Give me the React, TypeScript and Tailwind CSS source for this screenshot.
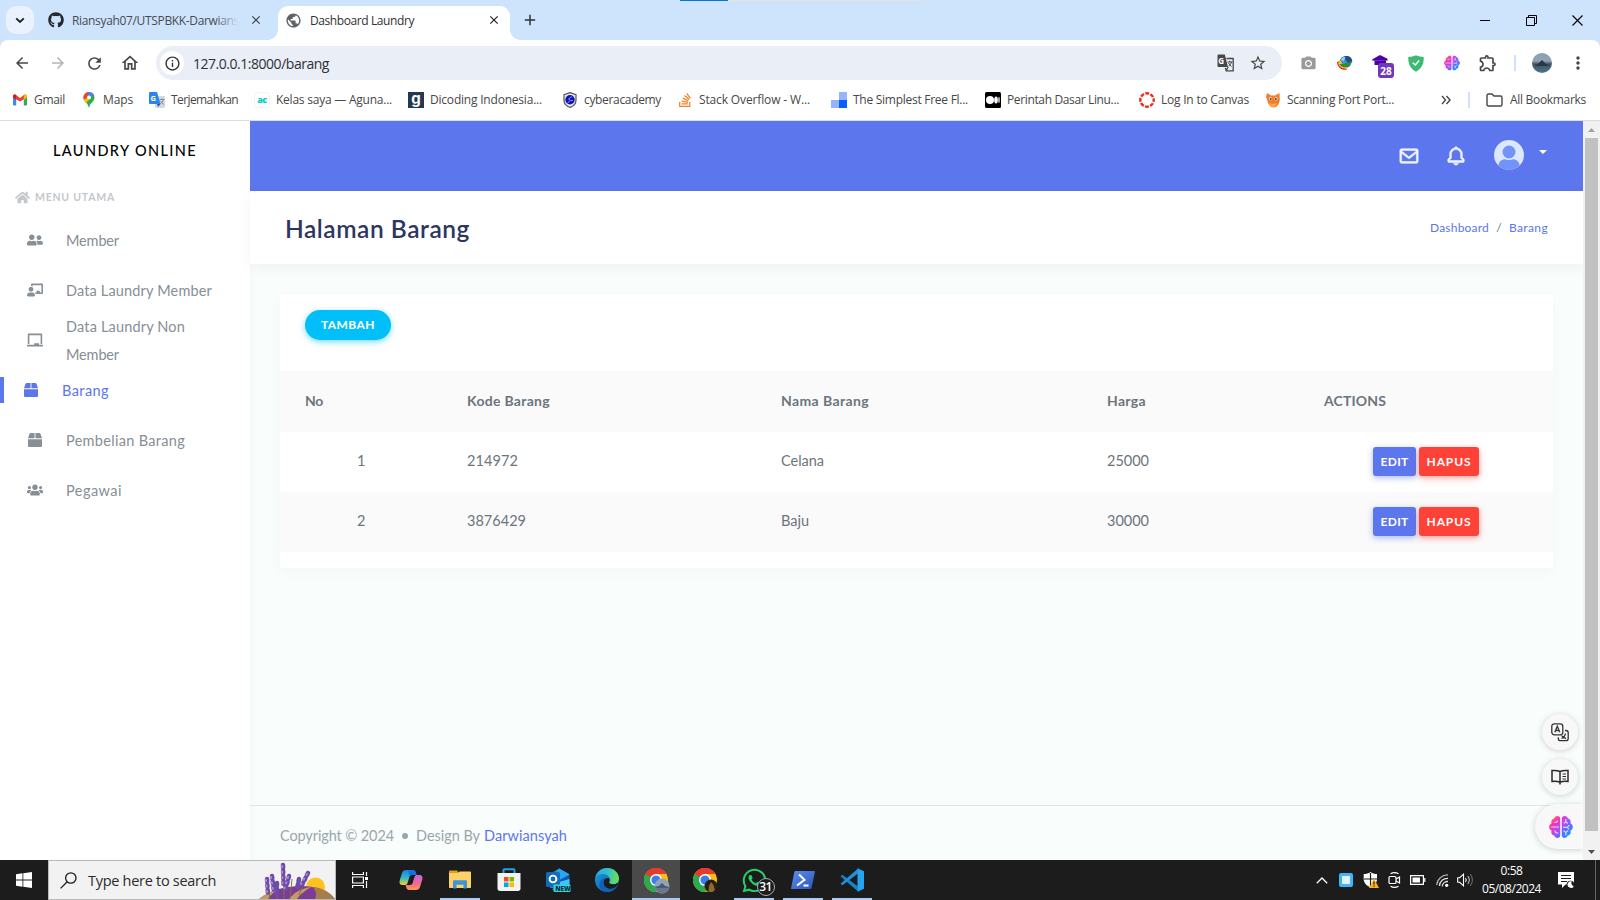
import { useLayoutEffect, useRef, useState, type ReactNode } from "react";
import {
  FaBox,
  FaChalkboard,
  FaChalkboardTeacher,
  FaGithub,
  FaHome,
  FaStackOverflow,
  FaUserFriends,
  FaUsers,
  FaWhatsapp,
} from "react-icons/fa";
import { BiBell, BiEnvelope } from "react-icons/bi";
import {
  MdArrowBack,
  MdArrowForward,
  MdClose,
  MdInfoOutline,
  MdMoreVert,
  MdOutlineExtension,
  MdOutlineHome,
  MdPhotoCamera,
  MdPublic,
  MdRefresh,
  MdStarOutline,
} from "react-icons/md";

/* One line of text, tracked so that it fills exactly `w` pixels. */
function Fit({ w, className = "", children }: { w: number; className?: string; children: string }) {
  const ref = useRef<HTMLSpanElement>(null);
  const [spacing, setSpacing] = useState(0);
  useLayoutEffect(() => {
    const el = ref.current;
    if (el) setSpacing((w - el.getBoundingClientRect().width) / children.length);
  }, [w, children]);
  return (
    <span className={`block shrink-0 whitespace-nowrap ${className}`} style={{ width: w }}>
      <span ref={ref} className="inline-block" style={{ letterSpacing: spacing }}>
        {children}
      </span>
    </span>
  );
}

function Gradients() {
  return (
    <svg width="0" height="0" className="absolute">
      <defs>
        <linearGradient id="brain" gradientUnits="userSpaceOnUse" x1="2" y1="2" x2="22" y2="21">
          <stop offset="0" stopColor="#ff9a1f" />
          <stop offset="0.22" stopColor="#ff2fb3" />
          <stop offset="0.5" stopColor="#b04df5" />
          <stop offset="0.72" stopColor="#5b6cff" />
          <stop offset="1" stopColor="#00a8ff" />
        </linearGradient>
        <linearGradient id="copA" x1="0" y1="0" x2="0" y2="1">
          <stop offset="0" stopColor="#1f7ff0" />
          <stop offset="0.5" stopColor="#26b8c9" />
          <stop offset="1" stopColor="#f6d32b" />
        </linearGradient>
        <linearGradient id="copB" x1="0" y1="0" x2="0" y2="1">
          <stop offset="0" stopColor="#c269f2" />
          <stop offset="0.55" stopColor="#f2668f" />
          <stop offset="1" stopColor="#ff9a4d" />
        </linearGradient>
        <linearGradient id="edgeA" x1="0" y1="0.2" x2="1" y2="0.3">
          <stop offset="0" stopColor="#2aa7e8" />
          <stop offset="0.55" stopColor="#35c1c9" />
          <stop offset="1" stopColor="#6be04c" />
        </linearGradient>
        <linearGradient id="edgeB" x1="0" y1="0" x2="1" y2="1">
          <stop offset="0" stopColor="#1b9de2" />
          <stop offset="1" stopColor="#0b4f9e" />
        </linearGradient>
        <linearGradient id="psg" x1="0" y1="0" x2="1" y2="1">
          <stop offset="0" stopColor="#5a8df0" />
          <stop offset="1" stopColor="#2b57b8" />
        </linearGradient>
        <linearGradient id="photo" x1="0" y1="0" x2="0" y2="1">
          <stop offset="0" stopColor="#7fa3bd" />
          <stop offset="0.4" stopColor="#9a9fae" />
          <stop offset="0.55" stopColor="#41536a" />
          <stop offset="1" stopColor="#4f7787" />
        </linearGradient>
      </defs>
    </svg>
  );
}

function BrainIcon({ size }: { size: number }) {
  return (
    <svg width={size} height={size} viewBox="0 0 24 24">
      <path
        d="M11.200 3.500v17c0 1.500-1.200 2.500-2.700 2.500-1.600 0-2.800-1-3.200-2.400C3.500 20.300 2.300 19 2.300 17.300c0-.5.1-1 .300-1.500C1.100 15 .2 13.600.2 12s.9-3.100 2.400-3.800c-.9-2.200.4-4.400 2.500-4.800C5.400 1.900 6.800 1 8.300 1c1.600 0 2.900 1 2.900 2.500z"
        fill="url(#brain)"
      />
      <path
        d="M12.800 3.500v17c0 1.500 1.200 2.500 2.700 2.500 1.600 0 2.800-1 3.200-2.400 1.800-.3 3-1.600 3-3.300 0-.5-.1-1-.3-1.500 1.500-.800 2.400-2.200 2.400-3.800s-.9-3.100-2.400-3.800c.9-2.200-.4-4.400-2.500-4.800C18.600 1.900 17.200 1 15.700 1c-1.600 0-2.900 1-2.900 2.500z"
        fill="url(#brain)"
      />
      <path
        d="M5.800 7.300c1.200.3 2.300-.3 2.600-1.500M2.500 12h7M6 16.200c.3 1.600 1.500 2.200 3 1.800M15.300 8.200l1.500-1.500 1.600 1.500M16.800 6.700V4.500M14.500 12.300h3.700l2-2M18.200 12.300l1.500 1.500M15 16l1.800 1.500 2-1.700M16.800 17.500v2.300"
        stroke="#fff"
        strokeOpacity=".75"
        strokeWidth="1.200"
        fill="none"
        strokeLinecap="round"
      />
    </svg>
  );
}

/* ---------- browser icons ---------- */

function GmailIcon() {
  return (
    <svg width="16" height="16" viewBox="0 0 16 16">
      <path d="M1 4v8.500c0 .6.4 1 1 1h2.200V7z" fill="#4285f4" />
      <path d="M15 4v8.500c0 .6-.4 1-1 1h-2.200V7z" fill="#34a853" />
      <path d="M1 4.300C1 2.600 2.900 2 4.100 3L8 6v3.600L1 5.600z" fill="#ea4335" />
      <path d="M15 4.300C15 2.600 13.100 2 11.900 3L8 6v3.600L15 5.600z" fill="#ea4335" />
      <path d="M11.800 3.100L13 2.500c1.200-.2 2 .7 2 1.800v1.300l-3.200 2.300z" fill="#fbbc04" />
      <path d="M4.200 3.100L3 2.500c-1.200-.2-2 .7-2 1.800v1.300l3.200 2.300z" fill="#c5221f" />
    </svg>
  );
}
function MapsIcon() {
  return (
    <svg width="16" height="16" viewBox="0 0 16 16">
      <path d="M8 0a5.500 5.500 0 0 0-5.500 5.500C2.500 9.500 6.800 10.500 8 16c1.200-5.500 5.500-6.500 5.500-10.500A5.500 5.500 0 0 0 8 0z" fill="#34a853" />
      <path d="M3.700 2L8 5.500 3.600 9C2.500 7.500 1.800 4.500 3.700 2z" fill="#fbbc04" />
      <path d="M3.600 2.200A5.500 5.500 0 0 1 8 0L7 5z" fill="#ea4335" />
      <path d="M3.600 2.200L8 5.500 2.800 7.500c-.6-1.800-.4-3.900.8-5.300z" fill="#ea4335" />
      <path d="M7 .1a5.500 5.500 0 0 1 5.700 2.500L8 6z" fill="#4285f4" />
      <path d="M3 8l3-2 2 2-3.200 3.200z" fill="#fbbc04" />
      <circle cx="8" cy="5.500" r="2" fill="#fff" />
    </svg>
  );
}
function GTranslateIcon() {
  return (
    <svg width="16" height="16" viewBox="0 0 16 16">
      <rect x="6" y="4" width="10" height="12" rx="1" fill="#d5d8dc" />
      <path d="M1 0h7l3.500 12H1a1 1 0 0 1-1-1V1a1 1 0 0 1 1-1z" fill="#2a85f0" />
      <path d="M8 12h3.500L9 15z" fill="#1a56c4" />
      <text x="1.500" y="8.500" fontSize="7.500" fontWeight="700" fill="#fff" fontFamily="Open Sans">G</text>
      <path d="M10.500 7.500h5M13 6.500v1M14.500 7.500c-.6 2-2 3.500-3.500 4.500M11.500 9c.8 1.500 2 2.500 3.500 3.500" stroke="#7b8794" strokeWidth=".9" fill="none" />
    </svg>
  );
}
function AgunaIcon() {
  return (
    <span className="flex size-4 items-center justify-center rounded-sm border border-[#f1f3f3] pb-0.5 font-['Open_Sans',sans-serif] text-[9px] leading-none font-extrabold tracking-[-0.5px] text-[#00cfc8]">
      ac
    </span>
  );
}
function DicodingIcon() {
  return (
    <span className="flex size-4 items-center justify-center bg-[#25394c] pb-[3px] font-[Inter,sans-serif] text-[15px] leading-none font-bold text-white">
      g
    </span>
  );
}
function CyberIcon() {
  return (
    <svg width="16" height="16" viewBox="0 0 16 16">
      <path d="M8 .6l6 2v5.600c0 3.500-2.700 6-6 7.300-3.300-1.300-6-3.800-6-7.300V2.600z" fill="#e9e9ee" stroke="#555" strokeWidth="1.200" />
      <circle cx="8" cy="7.800" r="4.700" fill="#0c12b5" />
      <path d="M10 4.500L6.500 7l2 1.500-3 2.500M9 8.500h2" stroke="#8a90ff" fill="none" />
    </svg>
  );
}
function SquaresIcon() {
  return (
    <svg width="16" height="16" viewBox="0 0 16 16">
      <path d="M8 0h8v8H8zM0 8h8v8H0z" fill="#93b5fb" />
      <path d="M8 8h8v8H8z" fill="#0a5cff" />
    </svg>
  );
}
function MediumIcon() {
  return (
    <svg width="16" height="16" viewBox="0 0 16 16">
      <rect width="16" height="16" rx="1.500" fill="#000" />
      <circle cx="5" cy="8" r="4" fill="#fff" />
      <ellipse cx="11" cy="8" rx="1.800" ry="3.600" fill="#fff" />
      <ellipse cx="14" cy="8" rx=".7" ry="3.300" fill="#fff" />
    </svg>
  );
}
function CanvasIcon() {
  return (
    <svg width="16" height="16" viewBox="0 0 16 16">
      <circle cx="8" cy="8" r="6.700" fill="none" stroke="#f22818" strokeWidth="2.400" strokeDasharray="3.860 1.400" strokeDashoffset="1.900" />
    </svg>
  );
}
function FoxIcon() {
  return (
    <svg width="16" height="16" viewBox="0 0 16 16">
      <path d="M2 1l4 2.500h4L14.500 1l.3 7c-.5 4-3 7.500-6.300 7.500C5 15.500 3 12 2.500 9L1 5z" fill="#f47c2a" />
      <path d="M4 11c2 1 6 1 8 0-.5 2.500-2 4-4 4s-3.500-1.500-4-4z" fill="#ffa640" />
      <circle cx="5.500" cy="6.800" r="1.700" fill="#e8d9c4" />
      <circle cx="11" cy="6.800" r="1.700" fill="#e8d9c4" />
      <circle cx="5.700" cy="6.900" r=".9" fill="#333" />
      <circle cx="10.800" cy="6.900" r=".9" fill="#333" />
    </svg>
  );
}
function StackIcon() {
  return <FaStackOverflow size={16} color="#f48024" />;
}
function TranslateLineIcon() {
  return (
    <svg width="17" height="18" viewBox="0 0 17 18">
      <path d="M1.500.5h6.300l3.200 12.500H1.500a1 1 0 0 1-1-1v-10.500a1 1 0 0 1 1-1z" fill="#474747" />
      <text x="1.300" y="9.600" fontSize="8" fontWeight="700" fill="#fff" fontFamily="Open Sans">G</text>
      <path d="M9.500 4.500h6.700v12.300H9.200l-.8-3M9.200 16.500l2-3.500" stroke="#474747" strokeWidth="1.300" fill="none" />
      <path d="M10.500 8h4.800M12.800 6.800V8M14.500 8c-.4 1.700-1.400 3-2.800 4M11.500 9c.7 1.500 1.700 2.600 3 3.500" stroke="#474747" strokeWidth="1" fill="none" />
    </svg>
  );
}

const bookmarks: { icon: ReactNode; label: string; w: number; wide?: boolean }[] = [
  { icon: <GmailIcon />, label: "Gmail", w: 31 },
  { icon: <MapsIcon />, label: "Maps", w: 30 },
  { icon: <GTranslateIcon />, label: "Terjemahkan", w: 67 },
  { icon: <AgunaIcon />, label: "Kelas saya — Aguna...", w: 116, wide: true },
  { icon: <DicodingIcon />, label: "Dicoding Indonesia...", w: 112, wide: true },
  { icon: <CyberIcon />, label: "cyberacademy", w: 77 },
  { icon: <StackIcon />, label: "Stack Overflow - W...", w: 111, wide: true },
  { icon: <SquaresIcon />, label: "The Simplest Free Fl...", w: 115, wide: true },
  { icon: <MediumIcon />, label: "Perintah Dasar Linu...", w: 112, wide: true },
  { icon: <CanvasIcon />, label: "Log In to Canvas", w: 88 },
  { icon: <FoxIcon />, label: "Scanning Port Port...", w: 107, wide: true },
];

function TabStrip() {
  return (
    <div className="relative flex h-10 items-start bg-[#cee3fc]">
      <div className="absolute top-0 left-[680px] flex h-px w-[241px] bg-[#e3e3e3]">
        <div className="w-12 bg-[#0078d7]" />
      </div>
      <div className="mt-1.5 ml-1.5 flex size-7 items-center justify-center rounded-[10px] bg-[#e9f2fe]">
        <svg width="10" height="7" viewBox="0 0 10 7">
          <path d="M1.200 1.300L5 5l3.800-3.700" stroke="#1f1f1f" strokeWidth="1.800" fill="none" />
        </svg>
      </div>
      <div className="ml-3.5 flex h-10 w-[230px] items-center">
        <FaGithub size={16} color="#24292f" />
        <div className="relative ml-2 w-[167px] pt-px">
          <Fit w={167} className="text-[12px] text-[#474c52]">
            Riansyah07/UTSPBKK-Darwians
          </Fit>
          <div className="absolute inset-y-0 right-0 w-6 bg-linear-to-r from-transparent to-[#cee3fc]" />
        </div>
        <MdClose size={14} color="#3c4043" className="ml-[10px]" />
      </div>
      <div className="relative flex h-10 w-[232px] items-center">
        <div className="absolute inset-x-0 top-1.5 bottom-0 rounded-t-[10px] bg-white" />
        <div className="absolute bottom-0 -left-2.5 size-2.5 bg-[radial-gradient(circle_at_0_0,#cee3fc_9.500px,white_10px)]" />
        <div className="absolute -right-2.5 bottom-0 size-2.5 bg-[radial-gradient(circle_at_100%_0,#cee3fc_9.500px,white_10px)]" />
        <div className="relative flex items-center">
          <MdPublic size={17} color="#5f6368" className="ml-[7px]" />
          <Fit w={104} className="ml-2 pt-px text-[12px] text-[#303134]">
            Dashboard Laundry
          </Fit>
          <MdClose size={14} color="#1f1f1f" className="ml-[73px]" />
        </div>
      </div>
      <svg width="12" height="12" viewBox="0 0 12 12" className="mt-3.5 ml-[14px]">
        <path d="M6 .8v10.400M.8 6h10.400" stroke="#333" strokeWidth="1.500" />
      </svg>
      <div className="ml-auto flex h-10 items-center">
        <div className="flex w-[46px] justify-center">
          <div className="h-px w-2.5 bg-black" />
        </div>
        <div className="flex w-[46px] justify-center">
          <svg width="11" height="11" viewBox="0 0 11 11">
            <path d="M.5 2.500h8v8h-8zM2.500 2.500v-2h8v8h-2" stroke="#000" fill="none" />
          </svg>
        </div>
        <div className="flex w-[46px] justify-center">
          <svg width="11" height="11" viewBox="0 0 11 11">
            <path d="M.5 .5l10 10M10.500 .5l-10 10" stroke="#000" strokeWidth="1.100" fill="none" />
          </svg>
        </div>
      </div>
    </div>
  );
}

function Slot({ children }: { children: ReactNode }) {
  return <div className="flex w-9 shrink-0 items-center justify-center">{children}</div>;
}

function Toolbar() {
  return (
    <div className="bg-[#cee3fc]">
      <div className="rounded-t-lg bg-white">
        <div className="flex h-[46px] items-center pl-1">
          <Slot><MdArrowBack size={18} color="#474747" /></Slot>
          <Slot><MdArrowForward size={18} color="#b4b4b4" /></Slot>
          <Slot><MdRefresh size={19} color="#474747" /></Slot>
          <Slot><MdOutlineHome size={20} color="#474747" /></Slot>
          <div className="ml-2 flex h-[34px] w-[1126px] items-center rounded-full bg-[#e9eef7] px-1">
            <div className="flex size-6 items-center justify-center rounded-full bg-white">
              <MdInfoOutline size={17} color="#303134" />
            </div>
            <Fit w={136} className="ml-[9px] text-[14px] text-[#303134]">
              127.0.0.1:8000/barang
            </Fit>
            <div className="mr-[11px] ml-auto flex items-center gap-[15px]">
              <TranslateLineIcon />
              <MdStarOutline size={18} color="#474747" />
            </div>
          </div>
          <div className="ml-2 flex items-center">
            <Slot><MdPhotoCamera size={17} color="#9a9a9a" /></Slot>
            <Slot>
              <svg width="17" height="17" viewBox="0 0 17 17">
                <circle cx="9.500" cy="7" r="6" fill="#3f8fd6" />
                <path d="M1 7c0 5 5 9 10 7.500L9 11C6 11 4.500 9 5 6z" fill="#d22" />
                <path d="M2 8c1 4 6 7 10 5l-2-3C7 10 5 8 5 5z" fill="#f5c518" />
                <path d="M3.500 9c2 4 8 4.500 10.500 1l2.500-4c-2 0-4 .5-5.500 1.500L8 9z" fill="#2d8a3e" />
                <path d="M8 1.500c4-1.500 8 .5 8.300 4.500l-3.300 1.500C10 7 9 4 8 1.500z" fill="#1f4f8a" />
                <path d="M5 5c.8-2 2.600-3.200 4.500-3.300L8 6z" fill="#9bd0f0" />
              </svg>
            </Slot>
            <Slot>
              <div className="relative size-4">
                <svg width="16" height="14" viewBox="0 0 16 14">
                  <path d="M8 0l8 4-2 2v4H2.500V6L0 4.500z" fill="#4b00a8" />
                  <path d="M0 5.500h16" stroke="#7d4bd0" strokeWidth=".6" />
                </svg>
                <div className="absolute top-2 left-[6px] flex h-[15px] w-4 items-center justify-center rounded-[3px] bg-[#7138bd] text-[10px] leading-none font-bold text-white">
                  28
                </div>
              </div>
            </Slot>
            <Slot>
              <svg width="16" height="17" viewBox="0 0 16 17">
                <path d="M8 .3c2.500 1.200 5 1.700 7.700 1.700.2 6-1.200 11-7.700 14.700C1.500 13 .1 8 .3 2 3 2 5.500 1.500 8 .3z" fill="#3cba72" />
                <path d="M4.700 7.700L7.300 10l3.900-4.600" stroke="#fff" strokeWidth="1.500" fill="none" />
              </svg>
            </Slot>
            <Slot><BrainIcon size={16} /></Slot>
            <Slot><MdOutlineExtension size={20} color="#474747" /></Slot>
            <div className="ml-[8px] h-4 w-[2px] bg-[#cfe2fb]" />
            <svg width="20" height="20" viewBox="0 0 20 20" className="ml-4">
              <circle cx="10" cy="10" r="10" fill="url(#photo)" />
              <path d="M2 12l4-1 4-4 4 4 4 1-3 1H5z" fill="#27384d" />
            </svg>
            <Slot><div className="pl-[16px]"><MdMoreVert size={20} color="#474747" /></div></Slot>
          </div>
        </div>
        <div className="flex h-[34px] items-center pb-[6px] pl-3">
          <div className="flex items-center gap-4">
            {bookmarks.map((b) => (
              <div
                key={b.label}
                className={b.wide ? "flex w-[138px] items-center gap-1.5" : "flex items-center gap-1.5"}
              >
                <span className="flex size-4 items-center justify-center">{b.icon}</span>
                <Fit w={b.w} className="text-[12px] text-[#474747]">
                  {b.label}
                </Fit>
              </div>
            ))}
          </div>
          <svg width="10" height="10" viewBox="0 0 10 10" className="ml-[38px]">
            <path d="M1 1l3.500 4L1 9M5.500 1L9 5 5.500 9" stroke="#474747" strokeWidth="1.400" fill="none" />
          </svg>
          <div className="ml-[17px] h-4 w-[2px] bg-[#cfe2fb]" />
          <svg width="17" height="14" viewBox="0 0 17 14" className="ml-4">
            <path d="M1 2.500C1 1.500 1.500 1 2.500 1H6l2 2h6.500c1 0 1.500.5 1.500 1.500v7c0 1-.5 1.500-1.500 1.500h-12C1.500 13 1 12.500 1 11.500z" stroke="#474747" strokeWidth="1.400" fill="none" />
          </svg>
          <Fit w={76} className="ml-[7px] text-[12px] text-[#474747]">
            All Bookmarks
          </Fit>
        </div>
        <div className="h-px bg-[#dcdcdc]" />
      </div>
    </div>
  );
}

/* ---------- application page ---------- */

const menu = [
  { icon: <FaUserFriends size={16} />, lines: [["Member", 53]] },
  { icon: <FaChalkboardTeacher size={16} />, lines: [["Data Laundry Member", 146]] },
  { icon: <FaChalkboard size={16} />, lines: [["Data Laundry Non", 119], ["Member", 53]] },
  { icon: <FaBox size={14} />, lines: [["Barang", 47]], active: true },
  { icon: <FaBox size={14} />, lines: [["Pembelian Barang", 119]] },
  { icon: <FaUsers size={16} />, lines: [["Pegawai", 56]] },
] as { icon: ReactNode; lines: [string, number][]; active?: boolean }[];

function Sidebar() {
  return (
    <aside className="w-[250px] shrink-0 bg-white">
      <div className="flex h-[58px] items-center pt-0.5 pl-[53px]">
        <Fit w={144} className="text-[14.500px] font-medium text-black">
          LAUNDRY ONLINE
        </Fit>
      </div>
      <div className="flex h-[36px] items-center pl-[15px] text-[#c3c8cd]">
        <FaHome size={15} />
        <Fit w={80} className="ml-[5px] pt-px text-[10.500px] font-bold">
          MENU UTAMA
        </Fit>
      </div>
      <nav>
        {menu.map((m, i) => (
          <div
            key={i}
            className={
              m.active
                ? "flex h-[50px] items-center text-[#5c76ed]"
                : "flex h-[50px] items-center pl-[27px] text-[#868e96]"
            }
          >
            {m.active && <div className="mr-[19px] h-[26px] w-1 bg-[#5c76ed]" />}
            <span className="flex w-4 justify-center">{m.icon}</span>
            <div className="ml-[23px] pt-px">
              {m.lines.map(([t, w]) => (
                <Fit key={t} w={w} className="text-[14.500px] leading-7">
                  {t}
                </Fit>
              ))}
            </div>
          </div>
        ))}
      </nav>
    </aside>
  );
}

function TopBar() {
  return (
    <header className="flex h-[70px] items-start bg-[#5c76ed] pl-[1148px] text-[#f1f4fe]">
      <BiEnvelope size={22} className="mt-[24px] stroke-current stroke-[0.6]" />
      <BiBell size={22} className="mt-[24px] ml-[25px] stroke-current stroke-[0.6]" />
      <svg width="30" height="30" viewBox="0 0 30 30" className="mt-[19px] ml-[27px]">
        <defs>
          <clipPath id="ava">
            <circle cx="15" cy="15" r="15" />
          </clipPath>
        </defs>
        <g clipPath="url(#ava)">
          <rect width="30" height="30" fill="#dce8ff" />
          <circle cx="15" cy="12" r="6.500" fill="#7393fb" />
          <path d="M4.500 30v-4.500C4.500 21.500 8 19.300 11 19.300c1.500 1 6.500 1 8 0 3 0 6.500 2.200 6.500 6.200V30z" fill="#7393fb" />
        </g>
      </svg>
      <svg width="8" height="4" viewBox="0 0 8 4" className="mt-[29px] ml-[15px]">
        <path d="M0 0h8L4 4z" fill="#fff" />
      </svg>
    </header>
  );
}

const rows = [
  { no: "1", kode: "214972", kw: 51, nama: "Celana", nw: 43, harga: "25000" },
  { no: "2", kode: "3876429", kw: 59, nama: "Baju", nw: 28, harga: "30000" },
];

const grid = "grid grid-cols-[162px_314px_326px_217px_1fr] items-center pl-[25px] pb-0.5";

function Table() {
  return (
    <div className="text-[14.500px] text-[#6c757d]">
      <div className={`${grid} h-[61px] bg-[#fafafa] text-[14px] font-bold`}>
        <Fit w={18}>No</Fit>
        <Fit w={83}>Kode Barang</Fit>
        <Fit w={88}>Nama Barang</Fit>
        <Fit w={39}>Harga</Fit>
        <Fit w={62}>ACTIONS</Fit>
      </div>
      {rows.map((r) => (
        <div key={r.no} className={`${grid} h-[60px] odd:bg-[#fafafa]`}>
          <Fit w={8} className="ml-[52px]">{r.no}</Fit>
          <Fit w={r.kw}>{r.kode}</Fit>
          <Fit w={r.nw}>{r.nama}</Fit>
          <Fit w={42}>{r.harga}</Fit>
          <div className="ml-[49px] flex gap-[3px] text-[12px] font-bold text-white">
            <button className="flex h-[29px] w-[43px] items-center justify-center rounded-[3px] bg-[#5c76ed] pt-px shadow-[0_2px_6px_rgba(92,118,237,0.5)]">
              <Fit w={28}>EDIT</Fit>
            </button>
            <button className="flex h-[29px] w-[60px] items-center justify-center rounded-[3px] bg-[#ff4237] pt-px shadow-[0_2px_6px_rgba(255,66,55,0.5)]">
              <Fit w={45}>HAPUS</Fit>
            </button>
          </div>
        </div>
      ))}
    </div>
  );
}

function FloatingTools() {
  return (
    <div className="absolute right-0 bottom-[11px] flex flex-col items-end">
      <div className="mr-[5px] flex size-9 items-center justify-center rounded-full bg-[#f9f8f9] shadow-[0_1px_6px_rgba(0,0,0,0.18)]">
        <svg width="18" height="19" viewBox="0 0 18 19" fill="none" stroke="#333" strokeWidth="1.300">
          <rect x=".8" y=".8" width="11" height="11" rx="2.500" />
          <path d="M3.800 9.300l2.500-6 2.500 6M4.700 7.500h3.300" />
          <path d="M14 7.500h1c1.200 0 2.200 1 2.200 2.200v5.800c0 1.200-1 2.200-2.200 2.200H9.500c-1.200 0-2.200-1-2.200-2.200v-1.300M10.500 15.500c2-.8 3.500-2.300 4-5M10.500 12.500c1 1.500 2.500 2.500 4.500 3" />
        </svg>
      </div>
      <div className="mt-[9px] mr-[5px] flex size-9 items-center justify-center rounded-full bg-[#f9f8f9] shadow-[0_1px_6px_rgba(0,0,0,0.18)]">
        <svg width="18" height="16" viewBox="0 0 18 16" fill="none" stroke="#2b2b2b" strokeWidth="1.500">
          <path d="M9 2.500C7 1.600 4 1.200 1 1.500v11c3-.3 6 0 8 .8 2-.8 5-1.100 8-.8v-11c-3-.3-6 .1-8 1zM9 2.500v13" />
          <path d="M11.500 5h3.500M11.500 7.500h3.500M11.500 10h3.500" strokeWidth="1.200" />
        </svg>
      </div>
      <div className="mt-[9px] flex h-[45px] w-12 items-center rounded-l-full bg-[#f9f8f9] pl-[14px] shadow-[0_1px_6px_rgba(0,0,0,0.18)]">
        <BrainIcon size={24} />
      </div>
    </div>
  );
}

function Page() {
  return (
    <div className="relative flex h-[739px]">
      <div className="relative flex w-[1583px] overflow-hidden font-[Lato,sans-serif]">
        <Sidebar />
        <main className="flex flex-1 flex-col bg-[#f9fdfc] shadow-[inset_3px_0_6px_rgba(0,0,0,0.02)]">
          <TopBar />
          <div className="flex h-[73px] items-center bg-white pr-[35px] pl-[35px] shadow-[0_4px_14px_rgba(0,0,0,0.05)]">
            <Fit w={185} className="pt-[3px] text-[24.500px] font-semibold text-[#2d3663]">
              Halaman Barang
            </Fit>
            <div className="ml-auto flex pt-px text-[12px] text-[#5c76ed]">
              <Fit w={59}>Dashboard</Fit>
              <span className="w-[20px] text-center text-[#6c757d]">/</span>
              <Fit w={39}>Barang</Fit>
            </div>
          </div>
          <section className="mt-[30px] mr-[30px] ml-[30px] h-[274px] rounded-[3px] bg-white shadow-[0_4px_14px_rgba(0,0,0,0.03)]">
            <div className="h-[77px] pt-4 pl-[25px]">
              <button className="flex h-[30px] w-[86px] items-center justify-center rounded-full bg-[#00bff9] text-[12px] font-bold text-white shadow-[0_2px_6px_rgba(0,191,249,0.55)]">
                <Fit w={54}>TAMBAH</Fit>
              </button>
            </div>
            <Table />
          </section>
          <footer className="mt-auto flex h-[55px] items-center border-t border-[#e1e6ee] pt-[5px] pl-[30px] text-[14.500px] text-[#98a6ad]">
            <Fit w={114}>Copyright © 2024</Fit>
            <span className="mx-2 size-1.5 rounded-full bg-[#98a6ad]" />
            <Fit w={64}>Design By</Fit>
            <Fit w={83} className="ml-1 text-[#5c76ed]">Darwiansyah</Fit>
          </footer>
        </main>
        <FloatingTools />
      </div>
      <div className="flex w-[17px] flex-col items-center bg-[#f1f1f1]">
        <div className="flex h-[17px] items-center">
          <svg width="7" height="4" viewBox="0 0 7 4"><path d="M3.500 0L7 4H0z" fill="#a3a3a3" /></svg>
        </div>
        <div className="h-[693px] w-[13px] bg-[#c1c1c1]" />
        <div className="mt-auto flex h-[17px] items-center">
          <svg width="7" height="4" viewBox="0 0 7 4"><path d="M0 0h7L3.500 4z" fill="#505050" /></svg>
        </div>
      </div>
    </div>
  );
}

/* ---------- taskbar ---------- */

function CopilotIcon() {
  return (
    <svg width="24" height="22" viewBox="0 0 24 22">
      <path d="M7 1h7c1.500 0 2.300 1 2.700 2.500L17.500 6H13c-1.500 0-2.300.8-2.700 2.200L8.500 14c-.5 1.500-1.300 2-3 2H3.500C1 16 0 14 .7 11.500L3 4c.6-2 2-3 4-3z" fill="url(#copA)" />
      <path d="M9 1h5c1.500 0 2.300 1 2.700 2.500L17.500 6H13c-1.200 0-2 .5-2.500 1.500z" fill="#1a6fe0" />
      <path d="M17 21h-7c-1.500 0-2.300-1-2.700-2.500L6.500 16H11c1.500 0 2.300-.8 2.700-2.200L15.500 8c.5-1.500 1.300-2 3-2h2c2.500 0 3.500 2 2.800 4.500L21 18c-.6 2-2 3-4 3z" fill="url(#copB)" />
    </svg>
  );
}
function ExplorerIcon() {
  return (
    <svg width="22" height="20" viewBox="0 0 22 20">
      <path d="M0 1.500C0 .7.500.5 1 .5h7l2 2.500H0z" fill="#e3a008" />
      <path d="M0 3h9l1.500-1.500H21c.6 0 1 .4 1 1V17c0 .6-.4 1-1 1H1c-.6 0-1-.4-1-1z" fill="#fcd266" />
      <path d="M4 18.500v-7c0-.8.5-1.300 1.300-1.300h11.400c.8 0 1.300.5 1.300 1.300v7h-3.500v-3.700h-7v3.700z" fill="#3d94dc" />
    </svg>
  );
}
function StoreIcon() {
  return (
    <svg width="24" height="24" viewBox="0 0 24 24">
      <path d="M6.500 6V2.300c0-.6.400-1 1-1h9c.6 0 1 .4 1 1V6" stroke="#1fa3e8" strokeWidth="2" fill="none" />
      <path d="M.5 5h23v15.500c0 1.500-1 2.500-2.500 2.500H3c-1.500 0-2.500-1-2.500-2.500z" fill="#f3f3f3" />
      <path d="M7 9h4.500v4.500H7z" fill="#f25022" />
      <path d="M12.500 9H17v4.500h-4.500z" fill="#7fba00" />
      <path d="M7 14.500h4.500V19H7z" fill="#00a4ef" />
      <path d="M12.500 14.500H17V19h-4.500z" fill="#ffb900" />
    </svg>
  );
}
function OutlookIcon() {
  return (
    <svg width="25" height="24" viewBox="0 0 25 24">
      <path d="M4 6L13 .500l10 5.500v14H4z" fill="#1f86dd" />
      <path d="M13 .5L23 6v3L11 14V3z" fill="#2aa5ec" />
      <path d="M10 14L23.500 6.500V22H6z" fill="#0f57b0" />
      <path d="M13 14l10.500-3v11H8z" fill="#41c3f5" />
      <rect x="0" y="4" width="14" height="15" rx="1.500" fill="#0f6cbd" />
      <circle cx="7" cy="11" r="3.400" stroke="#fff" strokeWidth="1.900" fill="none" />
      <rect x="7.500" y="16.500" width="17" height="7.500" rx="1" fill="#2fd6e0" />
      <text x="9.200" y="22.700" fontSize="6.400" fontWeight="800" fill="#0a2a38" fontFamily="Open Sans">NEW</text>
    </svg>
  );
}
function EdgeIcon() {
  return (
    <svg width="24" height="24" viewBox="0 0 24 24">
      <circle cx="12" cy="12" r="12" fill="url(#edgeB)" />
      <path d="M.3 10C1.500 4 6.300 0 12 0c7 0 12 5 12 10.500 0 3.500-2.500 5.800-6 5.800-3 0-4.300-1.200-3.800-2.300.8-1.500 1-2.500.3-4C13.500 7.500 11 6 8 6 4.500 6 1.500 7.500.3 10z" fill="url(#edgeA)" />
      <path d="M14.200 14c-.5 1.100.8 2.300 3.800 2.300 1.700 0 3-.4 4.500-1.300l.5 1c-2 4-6 5.500-9.500 4.500C9.500 19.500 7.500 16 9 12.500c.8-1.800 2.800-3 5-2.500.9 1.200 1 2.500.2 4z" fill="#1c1c1c" />
      <path d="M8.500 13c-1 4 1.500 7.500 5 8.500 3 .7 6.500-.5 8.500-3.500-2 4-6 6-10 6C7 24 4 20 4.500 16 5 12 8 10 11 9.500c-1.300.8-2.200 2-2.500 3.500z" fill="#1260b5" />
    </svg>
  );
}
function ChromeIcon({ badge }: { badge: string }) {
  return (
    <svg width="26" height="26" viewBox="0 0 26 26">
      <circle cx="12" cy="12" r="12" fill="#f9bc15" />
      <path d="M12 12L1.600 6A12 12 0 0 0 12 24l5-9z" fill="#2da94f" />
      <path d="M12 12L1.600 6A12 12 0 0 1 22.400 6H12z" fill="#e33b2e" />
      <path d="M1.600 6L6.800 15 12 12z" fill="#2da94f" />
      <path d="M1.600 6a12 12 0 0 1 20.800 0H12a6 6 0 0 0-5.200 3z" fill="#e33b2e" />
      <circle cx="12" cy="12" r="6" fill="#fff" />
      <circle cx="12" cy="12" r="4.600" fill="#3b7ded" />
      {badge === "dark" ? (
        <>
          <circle cx="18" cy="18" r="6.500" fill="#2a1d10" />
          <path d="M15.500 24l.5-6 2-4 2.500 3 1.500 5-2.500 2z" fill="#8a6a35" />
        </>
      ) : (
        <>
          <circle cx="18" cy="18" r="7.500" fill="#93a3b8" />
          <path d="M10.600 19l4.400-1 3-3 3 3 4.400 1a7.500 7.500 0 0 1-14.800 0z" fill="#66788e" />
          <path d="M11 19l4-1 3-3 3 3 4 1-2 1H13z" fill="#4b5a6e" />
        </>
      )}
    </svg>
  );
}
function PowerShellIcon() {
  return (
    <svg width="24" height="18" viewBox="0 0 24 18">
      <path d="M4.500 0H23c.7 0 1 .4.900 1L20.500 17c-.2.600-.6 1-1.300 1H1c-.7 0-1-.4-.9-1L3.300 1c.1-.6.500-1 1.200-1z" fill="url(#psg)" />
      <path d="M8 3.500l5.500 5.300L6 14.500M12.500 14.500h5" stroke="#fff" strokeWidth="2" fill="none" />
    </svg>
  );
}
function VsCodeIcon() {
  return (
    <svg width="24" height="24" viewBox="0 0 24 24">
      <path d="M17.500.3L24 3.200v17.600l-6.500 2.900z" fill="#28a4ee" />
      <path d="M.5 8.200l1.800-1.500L18 18.500v5z" fill="#1685cf" />
      <path d="M.5 15.800l1.800 1.500L18 5.500V.500z" fill="#2190dd" />
    </svg>
  );
}
function SearchArt() {
  return (
    <svg width="76" height="38" viewBox="0 0 76 38">
      <circle cx="56.500" cy="26" r="9.500" fill="#ffc21f" />
      <path d="M0 38c10-8 25-13 42-13 14 0 24 3 34 13z" fill="#7d3b98" />
      <path d="M54 26c10 1 17 5 22 12H56c2-4 1-8-2-12z" fill="#a77d4c" />
      <path d="M0 38c6-5 14-9 20-10-5 3-9 6-11 10zM30 38c5-6 10-10 22-12-6 4-11 7-14 12z" fill="#c49a5f" />
      <path d="M11 38L8 18M25 38l-.5-28M18 38V20M31 38l2-20M40 34l8-20" stroke="#6f7d3c" strokeWidth="1" />
      <g stroke="#6f4ba8" strokeWidth="4.500" strokeLinecap="round" strokeDasharray="2.500 3" fill="none">
        <path d="M24 4l.5 20M8 18l1 16M30 15l-4 16M18 22v12M49 12l-6 12M13 15l2 16M40 18l-2 10" />
      </g>
      <g stroke="#a98bd6" strokeWidth="2" strokeLinecap="round" strokeDasharray="1 4.500">
        <path d="M23 5l.5 18M7 19l1 12M29 16l-4 13M48 13l-6 10M12 16l2 13" />
      </g>
    </svg>
  );
}

const apps: { icon: ReactNode; open?: boolean; active?: boolean }[] = [
  { icon: <CopilotIcon /> },
  { icon: <ExplorerIcon />, open: true },
  { icon: <StoreIcon /> },
  { icon: <OutlookIcon /> },
  { icon: <EdgeIcon /> },
  { icon: <div className="pt-0.5 pl-0.5"><ChromeIcon badge="light" /></div>, active: true },
  { icon: <div className="pt-0.5 pl-0.5"><ChromeIcon badge="dark" /></div> },
  {
    icon: (
      <div className="relative">
        <FaWhatsapp size={27} color="#25d366" />
        <div className="absolute top-[11px] left-[16px] flex size-[18px] items-center justify-center rounded-full border border-[#aaa] bg-[#1c1c1c] text-[12px] leading-none font-semibold tracking-[-0.5px] text-white">
          31
        </div>
      </div>
    ),
    open: true,
  },
  { icon: <PowerShellIcon />, open: true },
  { icon: <VsCodeIcon />, open: true },
];

function Tray() {
  return (
    <div className="ml-auto flex h-10 items-center">
      <svg width="12" height="7" viewBox="0 0 12 7"><path d="M.8 6.200L6 1l5.200 5.200" stroke="#fff" strokeWidth="1.300" fill="none" /></svg>
      <div className="ml-[11px] size-[14px] rounded-[2px] border-[3px] border-[#45b3f7] bg-[#dff2ff]" />
      <svg width="16" height="16" viewBox="0 0 16 16" className="ml-[10px]">
        <path d="M7.500 0c2 1.500 4 2 6.500 2v5c0 4-3 7-6.500 8.500C4 14 .7 11 .7 7V2C3.500 2 5.500 1.500 7.500 0z" fill="#fff" />
        <path d="M7.500 1v14M1 7h13" stroke="#1c1c1c" strokeWidth="1.200" />
        <path d="M11 6.500l5 9.500H6z" fill="#fbb017" />
        <path d="M11 9.500v3M11 13.500v1.200" stroke="#222" strokeWidth="1.200" />
      </svg>
      <svg width="13" height="16" viewBox="0 0 13 16" fill="none" stroke="#fff" strokeWidth="1.200" className="ml-[9px]">
        <path d="M2.500 1.800C5 .4 8 .4 10.500 1.800M2.500 14.200c2.500 1.400 5.500 1.400 8 0" />
        <rect x="1" y="4.500" width="7" height="7" rx="1" />
        <path d="M8 7l3.500-2v6L8 9" />
      </svg>
      <svg width="16" height="10" viewBox="0 0 16 10" className="ml-[9px]">
        <path d="M.6.600h12.800v8.800H.6zM14.800 3v4" stroke="#fff" strokeWidth="1.200" fill="none" />
        <path d="M2.500 2.500h7.500v5H2.500z" fill="#fff" />
      </svg>
      <svg width="13" height="13" viewBox="0 0 13 13" fill="none" strokeWidth="1.300" className="ml-[10px]">
        <path d="M.8 11A10.500 10.500 0 0 1 12 1" stroke="#aaa" />
        <path d="M3.500 12A8 8 0 0 1 12 4.300M6.200 12.300A5.500 5.500 0 0 1 12 7.500" stroke="#ddd" />
        <circle cx="10.700" cy="11.300" r="1.600" fill="#fff" />
      </svg>
      <svg width="17" height="14" viewBox="0 0 17 14" fill="none" strokeWidth="1.100" className="ml-2">
        <path d="M.7 4.700h2L6.500 1.200v11.600L2.700 9.300h-2z" stroke="#fff" />
        <path d="M8.500 5c.9 1.200.9 2.800 0 4" stroke="#fff" />
        <path d="M10.800 3.200c1.800 2.300 1.800 5.300 0 7.600" stroke="#bbb" />
        <path d="M13.200 1.200c2.700 3.500 2.700 8.100 0 11.600" stroke="#666" />
      </svg>
      <div className="ml-2 flex flex-col items-center text-[12px] leading-[18px] text-white">
        <Fit w={22}>0:58</Fit>
        <Fit w={59}>05/08/2024</Fit>
      </div>
      <svg width="17" height="17" viewBox="0 0 17 17" className="ml-[17px]">
        <path d="M0 0h16v12.500H7.500L4 16v-3.500H0z" fill="#fff" />
        <path d="M3 3.500h10M3 6.500h10M3 9.500h6" stroke="#1c1c1c" strokeWidth="1.200" />
        <circle cx="12.500" cy="12.500" r="3.800" fill="#1c1c1c" />
        <path d="M13.800 9.300a3.400 3.400 0 1 0 2 5.200 3.700 3.700 0 0 1-2-5.200z" fill="#fff" />
      </svg>
      <div className="mr-1 ml-5 h-10 w-px bg-[#666]" />
    </div>
  );
}

function Taskbar() {
  return (
    <div className="flex h-10 bg-[#1c1c1c]">
      <div className="flex w-12 items-center justify-center">
        <svg width="16" height="16" viewBox="0 0 16 16">
          <path d="M0 2.200L6.500 1.300V7.500H0zM7.300 1.200L16 0v7.500H7.300zM0 8.400h6.500v6.300L0 13.800zM7.300 8.400H16V16l-8.700-1.200z" fill="#fff" />
        </svg>
      </div>
      <div className="flex w-72 items-center border border-[#b9b9b9] bg-[#f2f2f2] pl-[11px]">
        <svg width="17" height="17" viewBox="0 0 17 17" fill="none" stroke="#1c1c1c" strokeWidth="1.300">
          <circle cx="10.800" cy="6" r="5.200" />
          <path d="M7.200 9.800L.6 16.400" />
        </svg>
        <Fit w={128} className="ml-[11px] pt-px text-[14.500px] text-[#2b2b2b]">
          Type here to search
        </Fit>
        <div className="ml-auto">
          <SearchArt />
        </div>
      </div>
      <div className="flex w-12 items-center justify-center">
        <svg width="17" height="16" viewBox="0 0 17 16" fill="none" stroke="#fff" strokeWidth="1.200">
          <path d="M.6 0v2.500h10.800V0M.6 16v-2.500h10.800V16M.6 5h10.800v6H.6zM14.500 0v4M14.500 9v7" />
          <path d="M13 5h3v3h-3z" fill="#fff" stroke="none" />
        </svg>
      </div>
      <div className="ml-[3px] flex gap-px">
        {apps.map((a, i) => (
          <div
            key={i}
            className={
              a.active
                ? "flex w-12 flex-col items-center bg-[#4a4a4a]"
                : "flex w-12 flex-col items-center"
            }
          >
            <div className="flex flex-1 items-center">{a.icon}</div>
            {a.active && <div className="-mt-0.5 h-0.5 w-12 bg-[#a3cdf8]" />}
            {a.open && <div className="-mt-0.5 h-0.5 w-10 bg-[#a3cdf8]" />}
          </div>
        ))}
      </div>
      <Tray />
    </div>
  );
}

export default function App() {
  return (
    <div className="h-[900px] w-[1600px] overflow-hidden bg-white font-['Open_Sans',sans-serif]">
      <Gradients />
      <TabStrip />
      <Toolbar />
      <Page />
      <Taskbar />
    </div>
  );
}
